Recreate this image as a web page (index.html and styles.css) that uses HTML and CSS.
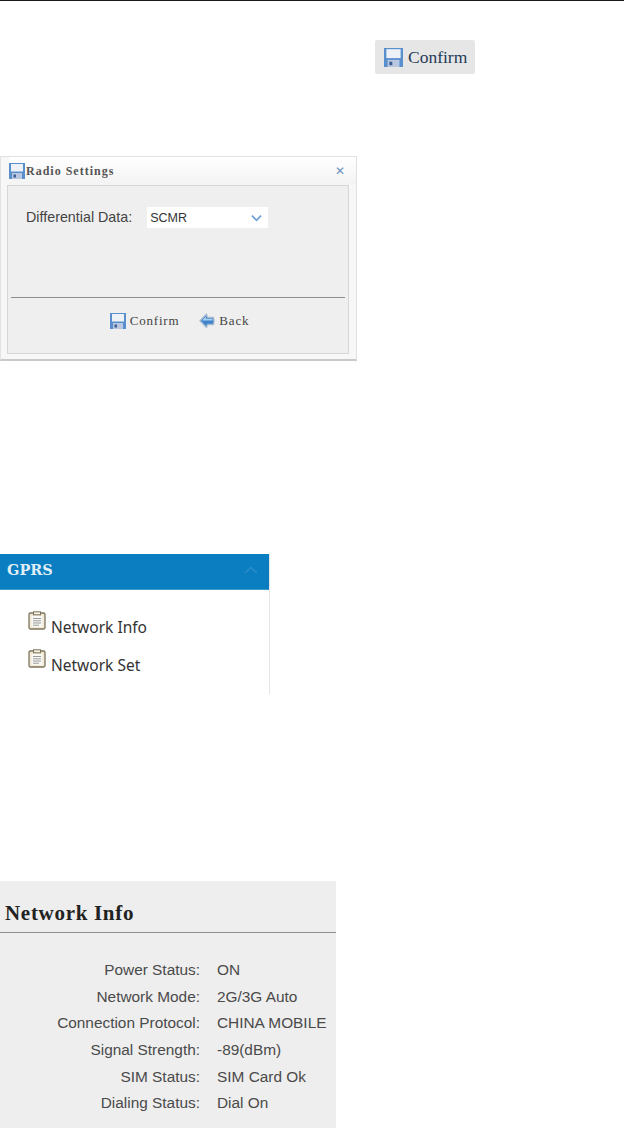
FILE: index.html
```html
<!DOCTYPE html>
<html lang="en">
<head>
<meta charset="utf-8">
<title>Manual page</title>
<link rel="stylesheet" href="styles.css">
</head>
<body>
<svg class="defs" width="0" height="0" aria-hidden="true">
  <defs>
    <symbol id="floppy" viewBox="0 0 16 16">
      <rect x="0" y="0" width="16" height="16" fill="#5a8fce"/>
      <rect x="2" y="1" width="12" height="7.5" fill="#eef2f7"/>
      <rect x="3" y="10" width="10" height="6" fill="#b9c8e0"/>
      <rect x="4.5" y="11.5" width="2.5" height="3" fill="#3c5f94"/>
    </symbol>
    <symbol id="back" viewBox="0 0 16 16">
      <path d="M7.5 1 L1 7.8 L7.5 14.5 L8.5 11.5 H14.5 Q15.5 8 14.5 4.5 H8.5 Z" fill="#3f83cc" stroke="#a8bccf" stroke-width="1.3" stroke-linejoin="round"/>
      <path d="M7 3.5 L3 7.5 H13.5 V5.8 H7 Z" fill="#a9d2f2"/>
    </symbol>
    <symbol id="clip" viewBox="0 0 18 19">
      <rect x="1" y="2" width="16" height="16" rx="1.5" fill="#efe9d6" stroke="#7d745c" stroke-width="1.3"/>
      <rect x="3.5" y="5" width="11" height="11" fill="#f8f8f4"/>
      <rect x="5.5" y="0.8" width="7" height="3" fill="#f4f1e6" stroke="#7d745c" stroke-width="1"/>
      <path d="M5 7.5 H13 M5 9.8 H13 M5 12 H13 M5 14.2 H11" stroke="#9a9a9a" stroke-width="1"/>
    </symbol>
  </defs>
</svg>

<div class="top-rule"></div>

<div class="confirm-row">
  <div class="confirm-chip">
    <svg class="icon-lg"><use href="#floppy"/></svg>
    <span>Confirm</span>
  </div>
</div>

<section class="dialog">
  <header class="dialog-title">
    <svg class="icon-md"><use href="#floppy"/></svg>
    <span class="dialog-name">Radio Settings</span>
    <span class="dialog-close">✕</span>
  </header>
  <div class="dialog-panel">
    <div class="field">
      <span class="field-label">Differential Data:</span>
      <div class="select">
        <span>SCMR</span>
        <svg class="chevron" viewBox="0 0 12 8"><path d="M1 1.5 L6 6.5 L11 1.5" fill="none" stroke="#6fa3d6" stroke-width="2"/></svg>
      </div>
    </div>
    <div class="dialog-rule"></div>
    <div class="dialog-actions">
      <div class="action"><svg class="icon-md"><use href="#floppy"/></svg><span>Confirm</span></div>
      <div class="action"><svg class="icon-md"><use href="#back"/></svg><span>Back</span></div>
    </div>
  </div>
</section>

<section class="gprs">
  <header class="gprs-head">
    <span>GPRS</span>
    <svg class="gprs-chevron" viewBox="0 0 14 8"><path d="M1 7 L7 1.5 L13 7" fill="none" stroke="#2b8dc9" stroke-width="1.6"/></svg>
  </header>
  <ul class="gprs-list">
    <li class="gprs-item"><svg class="icon-clip"><use href="#clip"/></svg><span>Network Info</span></li>
    <li class="gprs-item"><svg class="icon-clip"><use href="#clip"/></svg><span>Network Set</span></li>
  </ul>
</section>

<section class="info">
  <h2 class="info-title">Network Info</h2>
  <dl class="info-grid">
    <dt>Power Status:</dt><dd>ON</dd>
    <dt>Network Mode:</dt><dd>2G/3G Auto</dd>
    <dt>Connection Protocol:</dt><dd>CHINA MOBILE</dd>
    <dt>Signal Strength:</dt><dd>-89(dBm)</dd>
    <dt>SIM Status:</dt><dd>SIM Card Ok</dd>
    <dt>Dialing Status:</dt><dd>Dial On</dd>
  </dl>
</section>
</body>
</html>
```

FILE: styles.css
```css
* { box-sizing: border-box; }
html, body { margin: 0; padding: 0; background: #fff; }
body { height: 1128px; overflow: hidden; font-family: "Liberation Sans", Arial, sans-serif; }
.defs { display: block; height: 0; }

.top-rule { height: 1px; background: #1a1a1a; }

.confirm-row { display: flex; padding: 39px 0 0 375px; }
.confirm-chip {
  width: 100px; height: 34px; background: #e6e6e6; border-radius: 2px;
  display: flex; align-items: center; gap: 5px; padding-left: 9px;
  font: 17.5px "Liberation Serif", serif; color: #1f3a58;
}
.icon-lg { width: 19px; height: 19px; flex: none; }
.icon-md { width: 16px; height: 16px; flex: none; }

.dialog {
  margin-top: 82px; width: 357px; height: 205px;
  background: #f7f7f7; border: 1px solid #e2e2e2; border-bottom: 2px solid #c9c9c9;
  display: flex; flex-direction: column; padding: 0 7px 5px 6px;
}
.dialog-title {
  height: 28px; flex: none; display: flex; align-items: center; gap: 1px;
  margin: 0 -7px 0 2px; padding-right: 11px;
  background: linear-gradient(#ffffff, #f3f3f3);
}
.dialog-name { font: bold 12px "Liberation Serif", serif; letter-spacing: 1px; color: #555; flex: 1; }
.dialog-close { font: bold 12px "DejaVu Sans", sans-serif; color: #6b93bd; }

.dialog-panel {
  flex: 1; background: #efefef; border: 1px solid #d6d6d6;
  display: flex; flex-direction: column;
}
.field { display: flex; gap: 15px; padding: 21px 0 0 18px; height: 111px; align-items: flex-start; }
.field-label { font-size: 14.3px; line-height: 21px; color: #444; }
.select {
  width: 121px; height: 21px; background: #fff;
  display: flex; align-items: center; justify-content: space-between;
  padding: 0 6px 0 3px; font-size: 12.5px; color: #333;
}
.chevron { width: 11px; height: 8px; }
.dialog-rule { height: 1px; background: #8e8e8e; margin: 0 3px; }
.dialog-actions { display: flex; justify-content: center; gap: 20px; padding-top: 15px; padding-left: 3px; }
.action { display: flex; align-items: center; gap: 4px; font: 13px "Liberation Serif", serif; letter-spacing: 0.8px; color: #444; }

.gprs { margin-top: 193px; width: 270px; height: 140px; border-right: 1px solid #e4e4e4; }
.gprs-head {
  height: 36px; background: #0b7dc1; border-bottom: 1px solid #3e97cc;
  display: flex; align-items: center; justify-content: space-between;
  padding: 0 11px 4px 7px;
  font: bold 14.5px "DejaVu Serif", serif; color: #dfeef7;
}
.gprs-chevron { width: 14px; height: 8px; }
.gprs-list { list-style: none; margin: 0; padding: 21px 0 0 28px; display: flex; flex-direction: column; gap: 19px; }
.gprs-item { display: flex; align-items: flex-end; gap: 5px; height: 19px; font: 15.5px "Noto Sans", sans-serif; line-height: 19px; color: #333; }
.gprs-item span { position: relative; top: 7px; }
.icon-clip { width: 18px; height: 19px; flex: none; }

.info { margin-top: 187px; width: 336px; height: 247px; background: #eeeeee; }
.info-title {
  margin: 0; height: 52px; padding: 22px 0 0 5px; border-bottom: 1px solid #8f8f8f;
  font: bold 21px/20px "Liberation Serif", serif; letter-spacing: 0.7px; color: #222;
}
.info-grid {
  margin: 0; padding-top: 24px; display: grid;
  grid-template-columns: 200px 1fr; column-gap: 17px; grid-auto-rows: 26.7px;
  font-size: 15.4px; line-height: 26.7px; color: #4a4a4a;
}
.info-grid dt { text-align: right; }
.info-grid dd { margin: 0; white-space: nowrap; }
```
